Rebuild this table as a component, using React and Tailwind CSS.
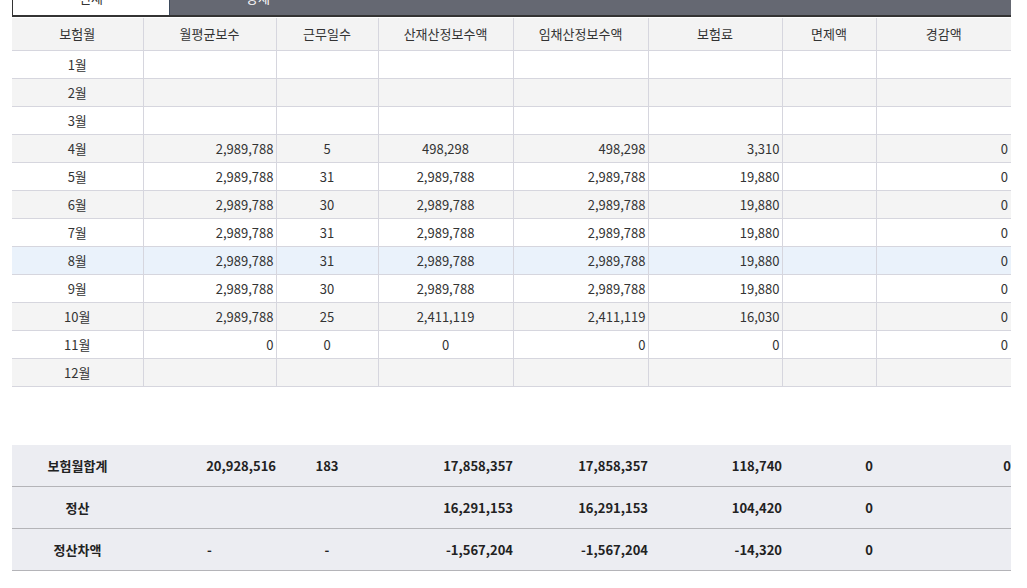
import React from "react";

// 보험월별 보수/보험료 내역
const COLS = [131, 133, 102, 135, 135, 134, 94, 135];

const HEADERS = ["보험월", "월평균보수", "근무일수", "산재산정보수액", "임채산정보수액", "보험료", "면제액", "경감액"];

const FULL = (days) => ["2,989,788", days, "2,989,788", "2,989,788", "19,880", "", "0"];

const MONTHS = [
	["1월"],
	["2월"],
	["3월"],
	["4월", "2,989,788", "5", "498,298", "498,298", "3,310", "", "0"],
	["5월", ...FULL("31")],
	["6월", ...FULL("30")],
	["7월", ...FULL("31")],
	["8월", ...FULL("31")],
	["9월", ...FULL("30")],
	["10월", "2,989,788", "25", "2,411,119", "2,411,119", "16,030", "", "0"],
	["11월", "0", "0", "0", "0", "0", "", "0"],
	["12월"],
];

// 정렬: 월평균보수 오른쪽, 근무일수/산재 가운데, 나머지 오른쪽
const cellAlign = [
	"text-center",
	"text-right pr-[2px]",
	"text-center",
	"text-center",
	"text-right pr-[2px]",
	"text-right pr-[2px]",
	"text-right pr-[2px]",
	"text-right pr-[3px]",
];

const SUMMARY = [
	["보험월합계", "20,928,516", "183", "17,858,357", "17,858,357", "118,740", "0", "0"],
	["정산", "", "", "16,291,153", "16,291,153", "104,420", "0", ""],
	["정산차액", "-", "-", "-1,567,204", "-1,567,204", "-14,320", "0", ""],
];

const sumAlign = (row, i) => {
	if (i === 0) return "text-center";
	if (i === 2) return "text-center";
	if (i === 1 && row[1] === "-") return "text-center";
	if (i === 7) return "text-right pr-0 -mr-[3px]";
	if (i === 6) return "text-right pr-[3px]";
	return "text-right pr-0";
};

function rowBg(idx) {
	if (idx === 7) return "bg-[#eaf2fb]";
	return idx % 2 === 1 ? "bg-[#f4f4f4]" : "bg-white";
}

export default function App() {
	return (
		<div className="min-h-screen bg-white font-['Noto_Sans_CJK_KR','Noto_Sans',sans-serif] text-[#333]">
			<div className="ml-[12px] w-[999px] overflow-hidden">
				{/* 탭 (위쪽은 스크롤로 잘려 있음) */}
				<div className="-mt-[20px] flex h-[37px] border-b-2 border-[#333]">
					<div className="flex w-[158px] items-end justify-center border-l border-r border-l-[#333] border-r-[#3d4a5c] bg-white pb-[11px] text-[13px] leading-none text-[#333]">
						전체
					</div>
					<div className="flex flex-1 items-end bg-[#656872] pb-[11px] pl-[76px] text-[13px] leading-none text-white">
						상세
					</div>
				</div>

				<table className="mt-[1px] table-fixed border-collapse text-[13px]" style={{ width: 999 }}>
					<colgroup>
						{COLS.map((w, i) => (
							<col key={i} style={{ width: w }} />
						))}
					</colgroup>
					<thead>
						<tr className="h-[32px] bg-[#f3f3f3]">
							{HEADERS.map((h, i) => (
								<th
									key={h}
									className={`border-b border-[#d6d6de] font-normal ${i > 0 ? "border-l" : ""}`}
								>
									{h}
								</th>
							))}
						</tr>
					</thead>
					<tbody>
						{MONTHS.map((row, idx) => (
							<tr key={row[0]} className={`h-[28px] ${rowBg(idx)}`}>
								{COLS.map((_, i) => (
									<td
										key={i}
										className={`border-b border-[#d6d6de] p-0 leading-none ${i > 0 ? "border-l" : ""} ${cellAlign[i]}`}
									>
										{row[i] || ""}
									</td>
								))}
							</tr>
						))}
					</tbody>
				</table>

				{/* 합계 */}
				<table className="mt-[58px] table-fixed border-collapse text-[13px] font-semibold text-[#222]" style={{ width: 999 }}>
					<colgroup>
						{COLS.map((w, i) => (
							<col key={i} style={{ width: w }} />
						))}
					</colgroup>
					<tbody>
						{SUMMARY.map((row) => (
							<tr key={row[0]} className="h-[42px] bg-[#ecedf2]">
								{row.map((v, i) => (
									<td key={i} className={`border-b border-[#b4b4b8] p-0 ${sumAlign(row, i)}`}>
										{v}
									</td>
								))}
							</tr>
						))}
					</tbody>
				</table>
			</div>
		</div>
	);
}
